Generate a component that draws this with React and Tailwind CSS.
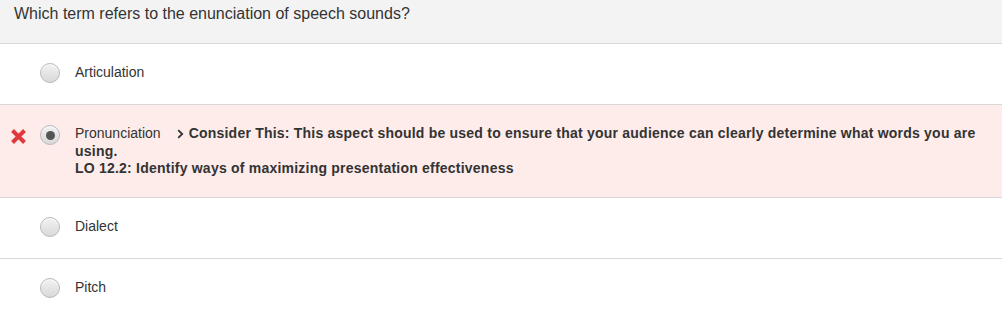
import React from 'react';

const font = { fontFamily: '"Liberation Sans", Arial, sans-serif' };

function Radio({ checked }) {
  return (
    <span className="relative flex h-[20px] w-[20px] shrink-0 items-center justify-center rounded-full border border-[#b9b9b9] bg-gradient-to-b from-[#f2f2f2] to-[#d9d9d9] shadow-[inset_0_1px_1px_rgba(255,255,255,0.8)]">
      {checked && <span className="h-[9px] w-[9px] rounded-full bg-[#555]" />}
    </span>
  );
}

function WrongMark() {
  return (
    <svg width="17" height="17" viewBox="0 0 17 17" className="shrink-0">
      <path d="M2.5 2.5 L14.5 14.5 M14.5 2.5 L2.5 14.5" stroke="#e0393e" strokeWidth="4" strokeLinecap="butt" />
    </svg>
  );
}

function Chevron() {
  return (
    <svg width="7" height="10" viewBox="0 0 7 10" className="mr-[5px] inline-block align-[-1px]">
      <path d="M1.2 1.2 L5.2 5 L1.2 8.8" fill="none" stroke="#333" strokeWidth="1.8" />
    </svg>
  );
}

function Option({ label }) {
  return (
    <div className="flex h-[61px] items-center border-b border-[#d7d7d7] pb-[4px]">
      <div className="ml-[40px] mt-[2px]"><Radio /></div>
      <span className="ml-[15px] text-[14px] text-[#333]">{label}</span>
    </div>
  );
}

export default function App() {
  return (
    <div className="w-[1002px] h-[310px] overflow-hidden bg-white" style={font}>
      <div className="h-[44px] border-b border-[#d7d7d7] bg-[#f3f3f3] px-[14px] pt-[4px] text-[16px] leading-[20px] text-[#333]">
        Which term refers to the enunciation of speech sounds?
      </div>

      <Option label="Articulation" />

      {/* incorrect selected answer with feedback */}
      <div className="flex h-[93px] items-start border-b border-[#d7d7d7] bg-[#fdecea] pt-[20px]">
        <div className="ml-[10px] mt-[3px]"><WrongMark /></div>
        <div className="ml-[13px] mt-0"><Radio checked /></div>
        <div className="ml-[15px] pr-[22px] text-[14px] leading-[17.5px] text-[#333]">
          <span>Pronunciation</span>
          <span className="ml-[16px] font-bold tracking-[0.22px]">
            <Chevron />Consider This: This aspect should be used to ensure that your audience can clearly determine what words you are using.
          </span>
          <div className="font-bold tracking-[0.22px]">LO 12.2: Identify ways of maximizing presentation effectiveness</div>
        </div>
      </div>

      <Option label="Dialect" />
      <Option label="Pitch" />
    </div>
  );
}
